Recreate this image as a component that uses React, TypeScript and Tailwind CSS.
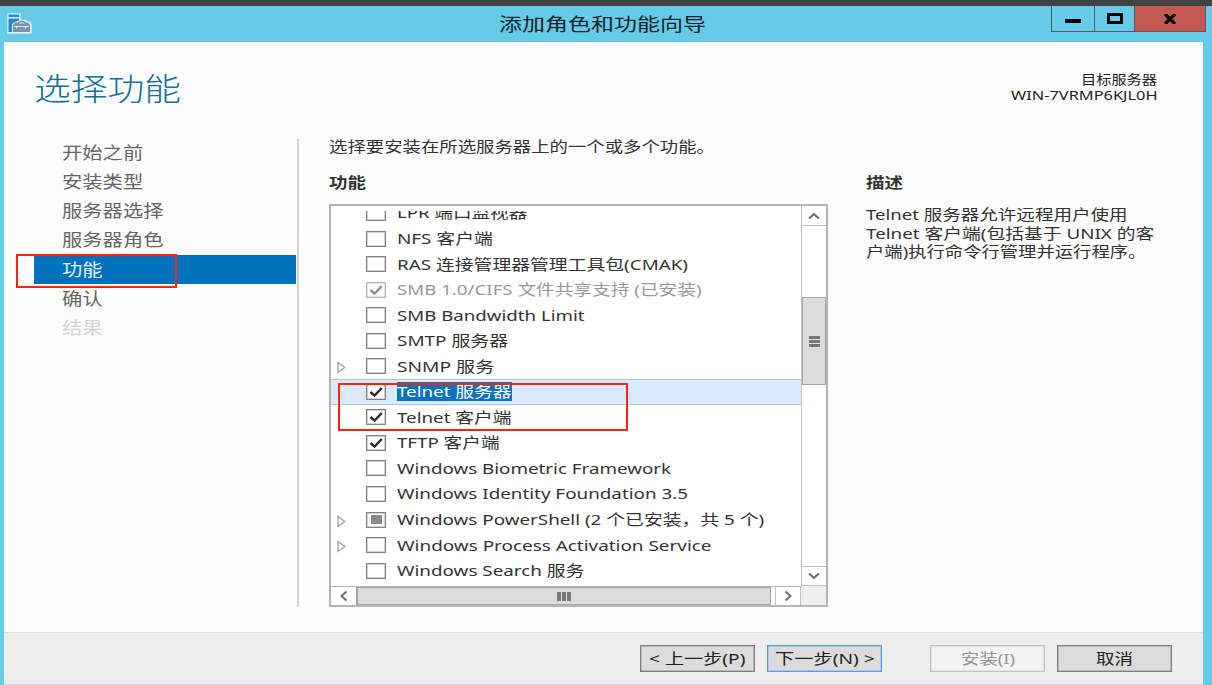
import React, { useLayoutEffect, useRef, useState } from "react";
import clsx from "clsx";

interface FitTextProps {
  width: number;
  className?: string;
  children: React.ReactNode;
}

type CheckState = "empty" | "checked" | "partial" | "locked";

interface Feature {
  label: string;
  width: number;
  state?: CheckState;
  expandable?: boolean;
  selected?: boolean;
}

interface Step {
  label: string;
  active?: boolean;
  disabled?: boolean;
}

const steps: Step[] = [
  { label: "开始之前" },
  { label: "安装类型" },
  { label: "服务器选择" },
  { label: "服务器角色" },
  { label: "功能", active: true },
  { label: "确认" },
  { label: "结果", disabled: true },
];

const features: Feature[] = [
  { label: "LPR 端口监视器", width: 130 },
  { label: "NFS 客户端", width: 95.5 },
  { label: "RAS 连接管理器管理工具包(CMAK)", width: 291 },
  { label: "SMB 1.0/CIFS 文件共享支持 (已安装)", width: 305, state: "locked" },
  { label: "SMB Bandwidth Limit", width: 188 },
  { label: "SMTP 服务器", width: 111 },
  { label: "SNMP 服务", width: 97, expandable: true },
  { label: "Telnet 服务器", width: 115, state: "checked", selected: true },
  { label: "Telnet 客户端", width: 115, state: "checked" },
  { label: "TFTP 客户端", width: 102, state: "checked" },
  { label: "Windows Biometric Framework", width: 274 },
  { label: "Windows Identity Foundation 3.5", width: 291 },
  {
    label: "Windows PowerShell (2 个已安装，共 5 个)",
    width: 367.5,
    state: "partial",
    expandable: true,
  },
  { label: "Windows Process Activation Service", width: 315, expandable: true },
  { label: "Windows Search 服务", width: 187 },
];

// Stretches one line of text horizontally until it fills the given width
const FitText = ({ width, className, children }: FitTextProps) => {
  const ref = useRef<HTMLSpanElement>(null);
  const [scale, setScale] = useState(1);

  useLayoutEffect(() => {
    if (ref.current?.offsetWidth) {
      setScale(width / ref.current.offsetWidth);
    }
  }, [width, children]);

  return (
    <span className={clsx("block shrink-0", className)} style={{ width }}>
      <span
        ref={ref}
        className="inline-block origin-left whitespace-nowrap align-top"
        style={{ transform: `scaleX(${scale})` }}
      >
        {children}
      </span>
    </span>
  );
};

const WizardIcon = () => (
  <svg width="25" height="21" viewBox="0 0 25 21" className="shrink-0">
    <path
      d="M0.500 0.500h13v7l1.500-.5h4l1.500 1.500h1.500l2.500 2.500v9.500h-24z"
      fill="#e3f3fb"
      stroke="#b5e1f3"
      strokeWidth="1"
    />
    <path d="M1.500 1.500h10.500v2.500H1.500zM1.500 5.500h10.500v2l-3 1-4 2.500v8H1.500z" fill="#1f8ad8" />
    <path d="M6 12l2-2.500h3l1.500-1.500h5l1.500 1.500h2l2 2.500V19H6z" fill="#7896ab" />
    <path d="M12.500 10h5M7 13.500h15" stroke="#d4e4ed" strokeWidth="1" />
    <path d="M9.500 13v2.500M18.500 13v2.500" stroke="#e6f0f5" strokeWidth="1.200" />
  </svg>
);

const CheckBox = ({ state = "empty" }: { state?: CheckState }) => (
  <span
    className={clsx(
      "flex h-4 w-5 shrink-0 items-center justify-center border bg-white ring-[0.5px] ring-inset",
      state === "locked"
        ? "border-[#b5b5b5] ring-[#ccc]"
        : "border-[#808080] ring-[#aaa]"
    )}
  >
    {state === "partial" && <span className="h-[9px] w-[11px] bg-[#8a8a8a]" />}
    {(state === "checked" || state === "locked") && (
      <svg width="16" height="12" viewBox="0 0 16 12" fill="none">
        <path
          d="M2.500 6l4 3.600L13.800 2"
          stroke={state === "locked" ? "#8c8c8c" : "#2b2b2b"}
          strokeWidth="2.400"
        />
      </svg>
    )}
  </span>
);

const FeatureRow = ({ label, width, state, expandable, selected }: Feature) => (
  <li
    className={clsx(
      "flex h-[25.55px] shrink-0 items-center border-y pl-[6px]",
      selected ? "border-[#a9c8ee] bg-[#dbe9fd]" : "border-transparent"
    )}
  >
    <span className="flex w-[29px] shrink-0 pt-[3px]">
      {expandable && (
        <svg width="9" height="13" viewBox="0 0 9 13" fill="none">
          <path d="M1 1.500v10l6.800-5z" stroke="#a3a3a3" strokeWidth="1.300" />
        </svg>
      )}
    </span>
    <CheckBox state={state} />
    <FitText
      width={width}
      className={clsx(
        "ml-[11px] text-[15px] leading-[19px]",
        selected && "bg-[#0a73be] text-white",
        state === "locked" && "text-[#989898]"
      )}
    >
      {label}
    </FitText>
  </li>
);

const Chevron = ({ d }: { d: string }) => (
  <svg width="12" height="12" viewBox="0 0 12 12" fill="none">
    <path d={d} stroke="#6e6e6e" strokeWidth="2" />
  </svg>
);

const VerticalScrollBar = () => (
  <div className="flex w-[25px] shrink-0 flex-col border-l border-[#c2c2c2] bg-white">
    <div className="flex h-5 items-center justify-center border-b border-[#c2c2c2]">
      <Chevron d="M1 8.500l5-4.500 5 4.500" />
    </div>
    <div className="mt-[71px] flex h-[88px] flex-col items-center justify-center gap-px border border-[#a6a6a6] bg-[#dcdcdc]">
      <span className="h-[3px] w-[11px] bg-[#777]" />
      <span className="h-[3px] w-[11px] bg-[#777]" />
      <span className="h-[3px] w-[11px] bg-[#777]" />
    </div>
    <div className="mt-auto flex h-5 items-center justify-center border-y border-[#c2c2c2]">
      <Chevron d="M1 3.500l5 4.500 5-4.500" />
    </div>
  </div>
);

const HorizontalScrollBar = () => (
  <div className="flex h-[19px] shrink-0">
    <div className="flex w-[470px] border-t border-[#b5b5b5] bg-white">
      <div className="flex w-[25px] items-center justify-center">
        <Chevron d="M8.500 1.500L3.500 6l5 4.500" />
      </div>
      <div className="flex w-[415px] items-center justify-center gap-px border border-l-2 border-[#a6a6a6] bg-[#dcdcdc]">
        <span className="h-[9px] w-1 bg-[#777]" />
        <span className="h-[9px] w-1 bg-[#777]" />
        <span className="h-[9px] w-1 bg-[#777]" />
      </div>
      <div className="ml-1 flex flex-1 items-center justify-center border-x border-[#c2c2c2]">
        <Chevron d="M3.500 1.500l5 4.500-5 4.500" />
      </div>
    </div>
    <div className="flex-1 bg-[#eee]" />
  </div>
);

const TitleBar = () => (
  <header className="flex h-9 shrink-0 items-start">
    <div className="w-[499px] pl-[7px] pt-[7px]">
      <WizardIcon />
    </div>
    <FitText width={207} className="pt-[5px] text-[18px] leading-[26px] text-[#12242c]">
      添加角色和功能向导
    </FitText>
    <div className="ml-auto mr-[6px] flex h-[26px] border border-t-0 border-[#4b5e66]">
      <div className="flex w-[43px] items-center justify-center border-r border-[#4b5e66]">
        <span className="mt-[5px] h-[4px] w-4 bg-black" />
      </div>
      <div className="flex w-10 items-center justify-center border-r border-[#4b5e66]">
        <span className="h-[11px] w-4 border-[3px] border-black" />
      </div>
      <div className="flex w-[70px] items-center justify-center bg-[#c3594f]">
        <svg width="14" height="10" viewBox="0 0 14 10" fill="none">
          <path d="M2 0l10 10M12 0L2 10" stroke="#000" strokeWidth="3.200" />
        </svg>
      </div>
    </div>
  </header>
);

const Sidebar = () => (
  <nav className="relative w-[262px]">
    <ul className="-mt-[1px]">
      {steps.map((step) => (
        <li
          key={step.label}
          className={clsx(
            "flex h-[29.2px] items-center pl-[27.5px] text-[17px]",
            step.active && "bg-[#0072bc] text-[#e3f1fb]",
            step.disabled && "text-[#d3d3d3]",
            !step.active && !step.disabled && "text-[#666]"
          )}
        >
          <FitText width={step.label.length * 20.3}>{step.label}</FitText>
        </li>
      ))}
    </ul>
    {/* Red callout around the current step */}
    <div className="absolute -left-[18px] top-[115px] h-[34px] w-[161px] border-2 border-[#f5260b]" />
  </nav>
);

const FeatureList = () => (
  <div className="relative mt-[12px] flex h-[403px] w-[499px] flex-col border-2 border-[#b5b5b5] bg-white">
    <div className="flex min-h-0 flex-1">
      <div className="min-w-0 flex-1 pt-[5px]">
        <ul className="flex h-[375px] flex-col overflow-hidden">
          <li className="-mt-[10.8px]" />
          {features.map((feature) => (
            <FeatureRow key={feature.label} {...feature} />
          ))}
        </ul>
      </div>
      <VerticalScrollBar />
    </div>
    <HorizontalScrollBar />
    {/* Red callout around the Telnet entries */}
    <div className="absolute left-[7px] top-[177px] h-[48px] w-[290px] border-2 border-[#f5260b]" />
  </div>
);

interface WizardButtonProps {
  label: string;
  width: number;
  className?: string;
}

const WizardButton = ({ label, width, className }: WizardButtonProps) => (
  <button
    className={clsx(
      "flex h-[27px] w-[115px] items-center justify-center border text-[15px] ring-[0.5px] ring-inset",
      className
    )}
  >
    <FitText width={width} className="text-left">
      {label}
    </FitText>
  </button>
);

const Footer = () => (
  <footer className="flex h-[53px] shrink-0 items-start border-b border-t border-b-[#b5dcec] border-t-[#dfdfdf] bg-[#eee] pl-[636px] pt-3">
    <WizardButton
      label="< 上一步(P)"
      width={97}
      className="border-[#7d7d7d] bg-[#dcdcdc] text-[#222] ring-[#999]"
    />
    <WizardButton
      label="下一步(N) >"
      width={100}
      className="ml-3 border-[#4d9df5] bg-[#dcdcdc] text-[#222] ring-[#7db5f0]"
    />
    <WizardButton
      label="安装(I)"
      width={54}
      className="ml-12 border-[#bfc3c6] bg-[#f3f3f3] text-[#969696] ring-[#d0d3d5]"
    />
    <WizardButton
      label="取消"
      width={37}
      className="ml-3 border-[#7d7d7d] bg-[#dcdcdc] text-[#222] ring-[#999]"
    />
  </footer>
);

const App = () => {
  return (
    <div
      lang="zh-CN"
      className="flex h-[685px] w-[1212px] flex-col overflow-hidden border-t-[6px] border-[#424242] bg-[#66cae9] font-['Noto_Sans','Noto_Sans_CJK_SC',sans-serif] text-[#333]"
    >
      <TitleBar />
      <div className="ml-1 mr-[9px] flex min-h-0 flex-1 flex-col bg-[#fcfcfc]">
        <div className="flex h-[97px] shrink-0 items-start justify-between pl-[30px] pr-[46px]">
          <h1 className="pt-[23px] font-['Noto_Sans_CJK_SC'] text-[31px] font-light leading-[44px] text-[#0f7394]">
            <FitText width={147}>选择功能</FitText>
          </h1>
          <div className="flex flex-col items-end pt-[30px] text-[13px] leading-[15px] text-[#222]">
            <FitText width={76}>目标服务器</FitText>
            <FitText width={146} className="pt-px">WIN-7VRMP6KJL0H</FitText>
          </div>
        </div>
        <div className="flex min-h-0 flex-1 pl-[30px]">
          <Sidebar />
          <div className="ml-[1px] h-[468px] w-[2px] bg-[#d2d2d2]" />
          <main className="ml-[30px] w-[499px] text-[15px]">
            <FitText width={386} className="-mt-px leading-[17px]">
              选择要安装在所选服务器上的一个或多个功能。
            </FitText>
            <h2 className="mt-[17px] font-bold leading-5">
              <FitText width={37}>功能</FitText>
            </h2>
            <FeatureList />
          </main>
          <aside className="ml-[38px] pt-[33px] text-[15px]">
            <h2 className="font-bold leading-5">
              <FitText width={37}>描述</FitText>
            </h2>
            <div className="mt-[13px] leading-[18.5px]">
              <FitText width={262}>Telnet 服务器允许远程用户使用</FitText>
              <FitText width={288}>Telnet 客户端(包括基于 UNIX 的客</FitText>
              <FitText width={281}>户端)执行命令行管理并运行程序。</FitText>
            </div>
          </aside>
        </div>
        <Footer />
      </div>
    </div>
  );
};

export default App;
